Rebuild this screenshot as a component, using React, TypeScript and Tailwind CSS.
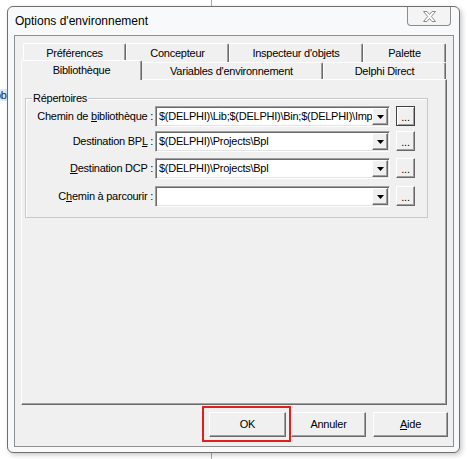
import React from "react";

const font = "font-['Liberation_Sans',Arial,sans-serif]";

const raised =
  "bg-[#f0f0f0] border border-t-white border-l-white border-r-[#696969] border-b-[#696969] shadow-[inset_-1px_-1px_0_#a0a0a0]";

const row1 = [
  { label: "Préférences", w: "w-[103px]" },
  { label: "Concepteur", w: "w-[103px]" },
  { label: "Inspecteur d'objets", w: "w-[134px]" },
  { label: "Palette", w: "w-[83px]" },
];

const Tab = ({ label, w }: { label: string; w: string }) => (
  <div
    className={`${w} flex h-full items-center justify-center rounded-t-[2px] border-l border-t border-l-white border-t-white border-r border-r-[#696969] shadow-[inset_-1px_0_0_#a0a0a0] bg-[#f0f0f0]`}
  >
    {label}
  </div>
);

const Combo = ({ value }: { value: string }) => (
  <div className="flex h-[21px] w-[235px] border border-t-[#a0a0a0] border-l-[#a0a0a0] border-r-white border-b-white bg-white shadow-[inset_1px_1px_0_#696969,inset_-1px_-1px_0_#e3e3e3] p-[1px]">
    <div className="flex-1 overflow-hidden whitespace-nowrap pl-[2px] leading-[17px]">
      {value}
    </div>
    <div className={`${raised} flex w-[16px] items-center justify-center`}>
      <svg width="7" height="4" viewBox="0 0 7 4">
        <path d="M0 0h7L3.5 4z" fill="#000" />
      </svg>
    </div>
  </div>
);

const Ellipsis = ({ focused }: { focused?: boolean }) => (
  <div
    className={`${
      focused
        ? "bg-[#f0f0f0] border border-[#404040] shadow-[inset_1px_1px_0_#fff,inset_-1px_-1px_0_#a0a0a0]"
        : raised
    } ml-[6px] flex h-[20px] w-[19px] items-end justify-center pb-[3px] leading-[10px]`}
  >
    ...
  </div>
);

const Row = ({
  label,
  value,
  mt,
  focused,
}: {
  label: React.ReactNode;
  value: string;
  mt: string;
  focused?: boolean;
}) => (
  <div className={`${mt} flex items-start`}>
    <div className="w-[127px] whitespace-nowrap text-right leading-[21px]">{label}</div>
    <div className="ml-[2px]">
      <Combo value={value} />
    </div>
    <Ellipsis focused={focused} />
  </div>
);

const Button = ({ children, w }: { children: React.ReactNode; w: string }) => (
  <div className={`${raised} ${w} flex h-[25px] items-center justify-center`}>{children}</div>
);

export default function App() {
  return (
    <div className={`relative h-[459px] w-[467px] overflow-hidden bg-white ${font} text-[11px] tracking-[-0.25px] text-black`}>
      {/* desktop behind the dialog */}
      <div className="absolute left-[211px] top-0 h-full w-px bg-[#a8a8a8]" />
      <div className="absolute left-0 top-[89px] w-[7px] overflow-hidden bg-[#dbe9fb] leading-[12px] text-[#222]">
        <span className="-ml-[5px] block">ob</span>
      </div>

      <div className="absolute left-[7px] top-[6px] flex h-[447px] w-[453px] flex-col rounded-[6px] border border-[#6f6f6f] bg-[#f8f9fa] shadow-[2px_2px_5px_rgba(0,0,0,0.22)]">
        {/* title bar */}
        <div className="relative flex h-[28px] items-center pl-[7px]">
          <span className="text-[12px] tracking-normal">Options d'environnement</span>
          <div className="absolute right-[8px] top-0 flex h-[19px] w-[44px] items-center justify-center rounded-b-[4px] border border-t-0 border-[#8c8c8c] bg-[#f4f4f4]">
            <svg width="13" height="11" viewBox="0 0 13 11">
              <path
                d="M0.5 0.5h3.5l2.5 3 2.5-3h3.5l-4.2 5 4.2 5h-3.5l-2.5-3-2.5 3h-3.5l4.2-5z"
                fill="#fff"
                stroke="#8a8a8a"
                strokeWidth="1"
              />
            </svg>
          </div>
        </div>

        {/* client area */}
        <div className="ml-[6px] flex h-[412px] w-[440px] flex-col border border-[#8e8f8f] bg-[#f0f0f0]">
          <div className="flex flex-col pl-[6px] pt-[7px]">
            <div className="flex h-[19px] pl-[2px]">
              {row1.map((t) => (
                <Tab key={t.label} label={t.label} w={t.w} />
              ))}
            </div>
            <div className="flex h-[17px] items-start pl-[2px]">
              <div className="relative z-10 -mx-[2px] -mt-[2px] flex h-[20px] w-[121px] items-center justify-center rounded-t-[2px] border-l border-t border-r border-l-white border-t-white border-r-[#696969] bg-[#f0f0f0] pb-[1px] shadow-[inset_-1px_0_0_#a0a0a0]">
                Bibliothèque
              </div>
              <Tab label="Variables d'environnement" w="w-[183px]" />
              <Tab label="Delphi Direct" w="w-[123px]" />
            </div>

            {/* tab sheet */}
            <div className="h-[326px] w-[426px] border border-t-white border-l-white border-r-[#696969] border-b-[#696969] shadow-[inset_-1px_-1px_0_#a0a0a0]">
              <div className="relative ml-[3px] mt-[18px] h-[120px] w-[403px] border border-[#c8c8c8] shadow-[inset_1px_1px_0_#fff]">
                <span className="absolute -top-[7px] left-[6px] bg-[#f0f0f0] px-[1px] leading-[13px]">
                  Répertoires
                </span>
                <div className="flex flex-col pt-[7px]">
                  <Row
                    mt="mt-0"
                    focused
                    label={
                      <>
                        Chemin de <u className="underline-offset-[1px]">b</u>ibliothèque :
                      </>
                    }
                    value="$(DELPHI)\Lib;$(DELPHI)\Bin;$(DELPHI)\Imports"
                  />
                  <Row
                    mt="mt-[4px]"
                    label={
                      <>
                        Destination BP<u className="underline-offset-[1px]">L</u> :
                      </>
                    }
                    value="$(DELPHI)\Projects\Bpl"
                  />
                  <Row
                    mt="mt-[6px]"
                    label={
                      <>
                        <u className="underline-offset-[1px]">D</u>estination DCP :
                      </>
                    }
                    value="$(DELPHI)\Projects\Bpl"
                  />
                  <Row
                    mt="mt-[7px]"
                    label={
                      <>
                        C<u className="underline-offset-[1px]">h</u>emin à parcourir :
                      </>
                    }
                    value=""
                  />
                </div>
              </div>
            </div>
          </div>

          {/* dialog buttons */}
          <div className="mt-[7px] flex justify-end pr-[5px]">
            <div className="relative">
              <Button w="w-[77px]">OK</Button>
              <div className="absolute -left-[7px] -top-[6px] h-[36px] w-[89px] border-2 border-[#e0201e]" />
            </div>
            <div className="ml-[5px]">
              <Button w="w-[75px]">Annuler</Button>
            </div>
            <div className="ml-[7px]">
              <Button w="w-[75px]">
                <span>
                  <u className="underline-offset-[1px]">A</u>ide
                </span>
              </Button>
            </div>
          </div>
        </div>
      </div>
    </div>
  );
}
